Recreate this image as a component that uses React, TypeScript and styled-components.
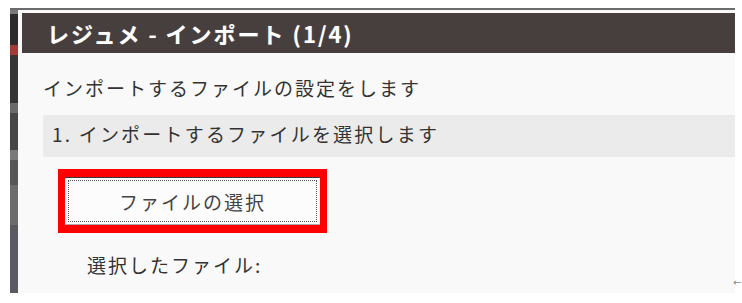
import React from "react";
import styled, { createGlobalStyle } from "styled-components";

const GlobalStyle = createGlobalStyle`
  html, body {
    margin: 0;
    padding: 0;
    background: #ffffff;
  }
  * { box-sizing: border-box; }
`;

const Page = styled.div`
  position: relative;
  width: 742px;
  height: 303px;
  padding: 8px 0 0 10px;
  overflow: hidden;
  font-family: "Noto Sans CJK JP", "Noto Sans", sans-serif;
`;

const Frame = styled.div`
  width: 725px;
  border-top: 2px solid #6b6b6b;
  display: flex;
`;

const Backdrop = styled.div`
  width: 8px;
  height: 283px;
  flex: none;
  background: linear-gradient(
    to bottom,
    #7a7a7a 0px,
    #7a7a7a 4px,
    #2c2c2c 4px,
    #2c2c2c 35px,
    #a33a36 35px,
    #a33a36 45px,
    #363434 45px,
    #363434 93px,
    #6a6a6a 93px,
    #6a6a6a 103px,
    #474747 103px,
    #474747 140px,
    #7a7a7a 140px,
    #7a7a7a 150px,
    #565656 150px,
    #565656 175px,
    #6c6c6c 175px,
    #6c6c6c 215px,
    #5b5a63 215px,
    #5b5a63 283px
  );
`;

const Dialog = styled.div`
  width: 717px;
  height: 283px;
  background: #f9f9f9;
  padding-top: 3px;
  display: flex;
  flex-direction: column;
`;

const Header = styled.div`
  margin-left: 4px;
  height: 40px;
  background: #463f3e;
  padding-left: 25px;
  display: flex;
  align-items: center;
`;

const Title = styled.h1`
  margin: 0;
  font-size: 22px;
  font-weight: 700;
  letter-spacing: 2px;
  line-height: 1;
  color: #ffffff;
  text-shadow: 0 0 1px rgba(255, 255, 255, 0.4);
`;

const Body = styled.div`
  padding-left: 25px;
  display: flex;
  flex-direction: column;
  align-items: flex-start;
`;

const Text = styled.p<{ $indent?: number; $top: number }>`
  margin: ${(p) => p.$top}px 0 0 ${(p) => p.$indent ?? 0}px;
  font-size: 19px;
  letter-spacing: 2px;
  line-height: 24px;
  color: #333333;
`;

const SectionBar = styled.div`
  margin-top: 15px;
  align-self: stretch;
  height: 42px;
  background: #ebebeb;
  padding: 0 0 5px 9px;
  display: flex;
  align-items: center;
  font-size: 19px;
  letter-spacing: 2.2px;
  color: #333333;
`;

const Highlight = styled.div`
  margin: 12px 0 0 15px;
  width: 269px;
  height: 64px;
  border-style: solid;
  border-color: #ff0000;
  border-width: 8px 7px 8px 7px;
  display: flex;
`;

const FileButton = styled.button`
  flex: 1;
  margin: 0;
  padding: 0;
  background: #fcfcfc;
  border: none;
  border-top: 1px solid #3a3a3a;
  border-bottom: 1px solid #a8a8a8;
  outline: 1px dotted #555555;
  outline-offset: -4px;
  font-family: "Noto Sans CJK JP", "Noto Sans", sans-serif;
  font-size: 19px;
  letter-spacing: 2px;
  color: #444444;
  cursor: pointer;
`;

const EdgeArrow = styled.span`
  position: absolute;
  left: 733px;
  top: 277px;
  font-family: "DejaVu Sans", sans-serif;
  font-size: 10px;
  color: #888888;
`;

export default function App() {
  return (
    <>
      <GlobalStyle />
      <Page>
        <Frame>
          <Backdrop />
          <Dialog>
            <Header>
              <Title>レジュメ - インポート (1/4)</Title>
            </Header>
            <Body>
              <Text $top={23}>インポートするファイルの設定をします</Text>
              <SectionBar>1. インポートするファイルを選択します</SectionBar>
              <Highlight>
                <FileButton type="button">ファイルの選択</FileButton>
              </Highlight>
              <Text $top={20} $indent={44}>
                選択したファイル:
              </Text>
            </Body>
          </Dialog>
        </Frame>
        <EdgeArrow>←</EdgeArrow>
      </Page>
    </>
  );
}
